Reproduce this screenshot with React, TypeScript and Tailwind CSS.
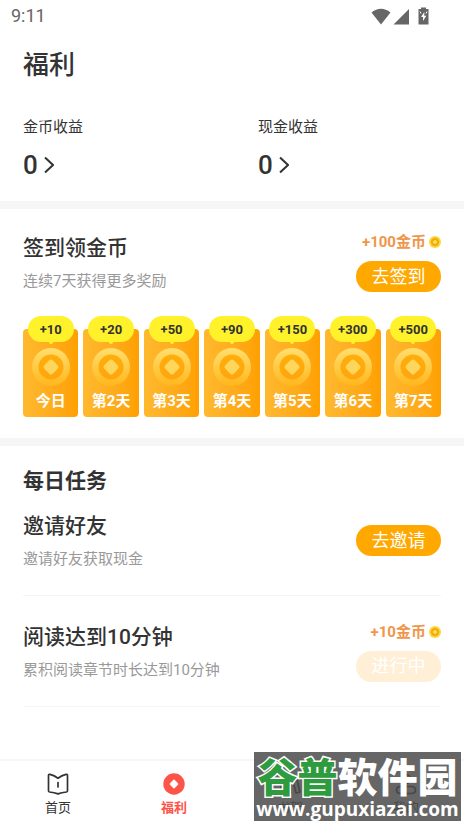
import clsx from 'clsx';

interface Day {
  label: string;
  reward: number;
}

const days: Day[] = [
  { label: '今日', reward: 10 },
  { label: '第2天', reward: 20 },
  { label: '第3天', reward: 50 },
  { label: '第4天', reward: 90 },
  { label: '第5天', reward: 150 },
  { label: '第6天', reward: 300 },
  { label: '第7天', reward: 500 },
];

const StatusBar = () => (
  <div className="flex h-8 items-center justify-between pl-[11px] pr-[35px] text-[#666]">
    <span className="text-lg leading-8">9:11</span>
    <div className="flex items-center">
      <svg width="20" height="17" viewBox="0 0 20 17" fill="currentColor">
        <path d="M0.5 4.5Q10 -3 19.5 4.5L10 16.5Z" />
      </svg>
      <svg className="ml-0.5" width="16" height="17" viewBox="0 0 16 17" fill="currentColor">
        <path d="M16 1V16.5H0.5Z" />
      </svg>
      <svg className="ml-[9px]" width="11" height="18" viewBox="0 0 11 18">
        <path d="M3 0.5H8V2H10.5V17.5H0.5V2H3Z" fill="currentColor" />
        <path d="M6.3 5L3 10H5V14L8.3 8.7H6.3Z" fill="#fff" />
        <path d="M2 4.5l1 2M9 4.5l-1 2" stroke="#fff" strokeWidth="1" />
      </svg>
    </div>
  </div>
);

const Balance = ({ label, value }: { label: string; value: number }) => (
  <div className="flex-1">
    <p className="text-[15px] leading-6">{label}</p>
    <button className="mt-2 flex items-center gap-1.5">
      <span className="text-[26px] font-medium leading-9">{value}</span>
      <svg width="10" height="18" viewBox="0 0 10 18" fill="none" stroke="currentColor" strokeWidth="2">
        <path d="M1 1.5L9 9L1 16.5" />
      </svg>
    </button>
  </div>
);

const Reward = ({ amount }: { amount: number }) => (
  <p className="flex items-center gap-[3px] text-[15px] font-bold leading-5 text-[#f0964a]">
    +{amount}金币
    <svg width="12" height="12" viewBox="0 0 12 12">
      <circle cx="6" cy="6" r="6" fill="#fbd936" />
      <circle cx="6" cy="6" r="4.2" fill="#f7a913" />
      <path d="M6 4L8 6L6 8L4 6Z" fill="#fde14a" stroke="#fde14a" strokeLinejoin="round" />
    </svg>
  </p>
);

const ActionButton = ({ label, disabled }: { label: string; disabled?: boolean }) => (
  <button
    disabled={disabled}
    className={clsx(
      'h-[31px] w-[85px] rounded-full text-lg leading-[30px] text-white',
      disabled ? 'bg-[#ffefd6]' : 'bg-[#ffa800]'
    )}
  >
    {label}
  </button>
);

const DayCard = ({ label, reward }: Day) => (
  <li className="flex flex-col items-center">
    <span className="relative z-10 h-[26px] w-[46px] rounded-full bg-[#fff22b] text-center text-[13px] font-bold leading-7 text-[#333]">
      +{reward}
      <i className="absolute -bottom-0.5 left-1/2 -ml-0.5 h-1 w-1 rounded-full bg-[#fff22b]" />
    </span>
    <div className="-mt-[13px] flex h-[88px] w-full flex-col items-center rounded bg-linear-to-r from-[#ffb92e] to-[#ffa000] pt-[19px]">
      <svg width="38" height="38" viewBox="0 0 38 38">
        <defs>
          <linearGradient id="ring" x1="0" y1="0" x2="0" y2="1">
            <stop offset="0" stopColor="#ffdf70" />
            <stop offset="1" stopColor="#ffb71c" />
          </linearGradient>
          <linearGradient id="core" x1="0" y1="0" x2="0" y2="1">
            <stop offset="0" stopColor="#ffae0a" />
            <stop offset="1" stopColor="#ffa50f" />
          </linearGradient>
        </defs>
        <circle cx="19" cy="19" r="19" fill="url(#ring)" />
        <circle cx="19" cy="19" r="12.5" fill="url(#core)" />
        <rect x="13" y="13" width="12" height="12" rx="2.5" fill="#ffd65c" transform="rotate(45 19 19)" />
      </svg>
      <span className="mt-[5px] text-[15px] font-bold leading-5 text-white">{label}</span>
    </div>
  </li>
);

interface TaskProps {
  title: string;
  description: string;
  action: string;
  reward?: number;
  disabled?: boolean;
}

const Task = ({ title, description, action, reward, disabled }: TaskProps) => (
  <li className="flex items-center justify-between border-b border-[#f4f4f4] pb-6">
    <div>
      <h3 className="text-[21px] font-medium leading-8">{title}</h3>
      <p className="mt-[5px] text-[15px] leading-6 text-[#999]">{description}</p>
    </div>
    <div className="flex flex-col items-end gap-[9px]">
      {reward && <Reward amount={reward} />}
      <ActionButton label={action} disabled={disabled} />
    </div>
  </li>
);

const HomeIcon = () => (
  <svg width="22" height="22" viewBox="0 0 22 22" fill="none" stroke="currentColor" strokeWidth="1.7" strokeLinejoin="round" strokeLinecap="round">
    <path d="M1.500 2.500Q1.500 1 3 1.400Q7.500 2.600 11 5.200Q14.500 2.600 19 1.400Q20.500 1 20.500 2.500V17.800Q20.500 18.800 19.500 19Q14.500 19.400 11 20.900Q7.500 19.400 2.500 19Q1.500 18.800 1.500 17.800Z" />
    <path d="M11 9.500V14" />
  </svg>
);

const WelfareIcon = () => (
  <svg width="22" height="22" viewBox="0 0 22 22">
    <circle cx="11" cy="11" r="10.7" fill="#fd544a" />
    <rect x="7.600" y="7.600" width="6.800" height="6.800" rx="1.200" fill="#fff" transform="rotate(45 11 11)" />
  </svg>
);

const ShelfIcon = () => (
  <svg width="22" height="22" viewBox="0 0 22 22" fill="none" stroke="currentColor" strokeWidth="1.700">
    <path d="M2 2H7V20H2ZM7 2H12V20H7ZM13 4L17 3L21 19L17 20Z" strokeLinejoin="round" />
  </svg>
);

const MineIcon = () => (
  <svg width="22" height="22" viewBox="0 0 22 22" fill="none" stroke="currentColor" strokeWidth="1.700">
    <circle cx="11" cy="6" r="4.500" />
    <path d="M6 13.500H16Q20.500 13.500 20.500 17T16 20.500H6Q1.500 20.500 1.500 17T6 13.500Z" />
  </svg>
);

const tabs = [
  { label: '首页', icon: HomeIcon },
  { label: '福利', icon: WelfareIcon, active: true },
  { label: '书架', icon: ShelfIcon },
  { label: '我的', icon: MineIcon },
];

const TabBar = () => (
  <nav className="relative mt-auto flex h-[66px] border-t-2 border-[#f7f7f7]">
    {tabs.map(({ label, icon: Icon, active }) => (
      <a
        key={label}
        href="#"
        className={clsx('flex flex-1 flex-col items-center pt-3', active && 'font-bold text-[#fd544a]')}
      >
        <Icon />
        <span className="mt-[3px] text-[13px] leading-5">{label}</span>
      </a>
    ))}
    <div className="absolute right-[3px] bottom-1 flex h-[69px] w-[207px] flex-col items-center bg-[#4b4b4b]/85 text-white">
      <p className="mt-1 text-[40px] font-black leading-[46px]">
        <span className="text-[#2f9b3f] [-webkit-text-stroke:3px_white] [paint-order:stroke_fill]">谷普</span>
        软件园
      </p>
      <p className="-mt-1 font-['Open_Sans'] text-[19px] font-bold leading-[22px]">www.gupuxiazai.com</p>
    </div>
  </nav>
);

const App = () => {
  return (
    <div className="flex min-h-screen flex-col bg-white font-[Roboto,'Noto_Sans_CJK_SC',sans-serif] text-[#333]">
      <StatusBar />
      <header className="px-[23px] pt-[13px] pb-[18px]">
        <h1 className="text-[26px] font-medium leading-10">福利</h1>
        <div className="mt-[30px] flex gap-[52px]">
          <Balance label="金币收益" value={0} />
          <Balance label="现金收益" value={0} />
        </div>
      </header>

      {/* Daily check-in */}
      <section className="border-t-8 border-[#f6f6f6] px-[23px] pt-[23px] pb-[21px]">
        <div className="flex items-start justify-between">
          <div>
            <h2 className="text-[21px] font-medium leading-8">签到领金币</h2>
            <p className="mt-[5px] text-[15px] leading-6 text-[#999]">连续7天获得更多奖励</p>
          </div>
          <div className="flex flex-col items-end gap-[9px]">
            <Reward amount={100} />
            <ActionButton label="去签到" />
          </div>
        </div>
        <ul className="mt-[23px] grid grid-cols-7 gap-[5px]">
          {days.map((day) => (
            <DayCard key={day.label} {...day} />
          ))}
        </ul>
      </section>

      {/* Tasks */}
      <section className="border-t-8 border-[#f6f6f6] px-[23px] pt-[19px]">
        <h2 className="text-[21px] font-bold leading-8">每日任务</h2>
        <ul className="mt-[13px] flex flex-col gap-[25px]">
          <Task title="邀请好友" description="邀请好友获取现金" action="去邀请" />
          <Task
            title="阅读达到10分钟"
            description="累积阅读章节时长达到10分钟"
            action="进行中"
            reward={10}
            disabled
          />
        </ul>
      </section>

      <TabBar />
    </div>
  );
};

export default App;
